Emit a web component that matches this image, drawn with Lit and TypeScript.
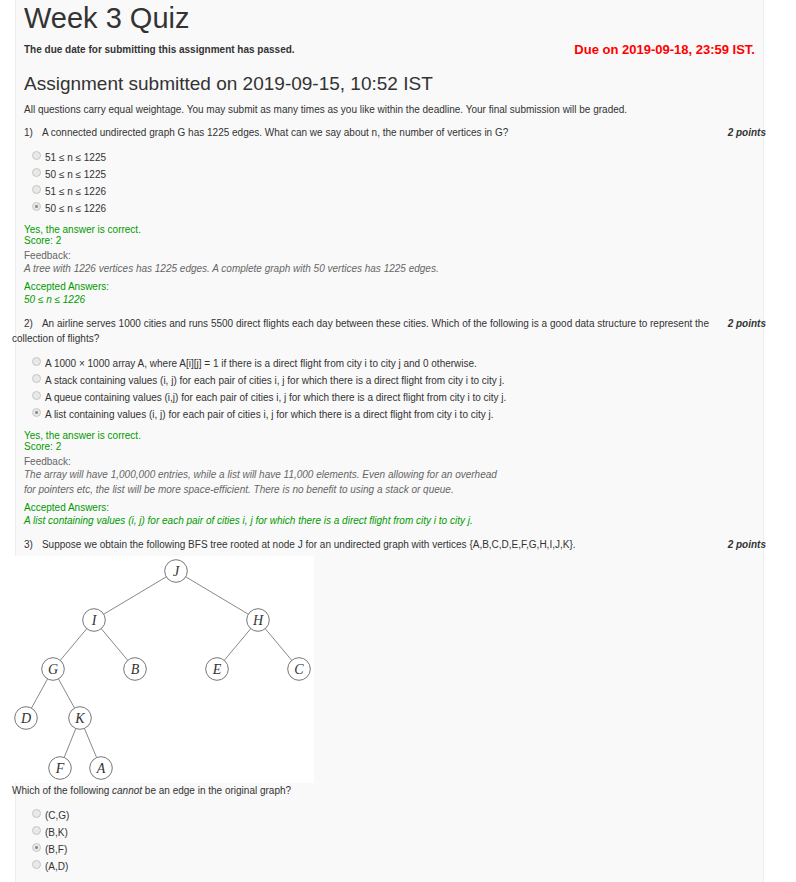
import { LitElement, html, svg, css, nothing } from "lit";
import type { TemplateResult } from "lit";
import { customElement, property } from "lit/decorators.js";

interface Question {
  id: number;
  prompt: string;
  options: string[];
  chosen: number;
  feedback?: string;
  accepted?: string;
  figure?: boolean;
}

const QUESTIONS: Question[] = [
  {
    id: 1,
    prompt:
      "A connected undirected graph G has 1225 edges. What can we say about n, the number of vertices in G?",
    options: ["51 ≤ n ≤ 1225", "50 ≤ n ≤ 1225", "51 ≤ n ≤ 1226", "50 ≤ n ≤ 1226"],
    chosen: 3,
    feedback:
      "A tree with 1226 vertices has 1225 edges. A complete graph with 50 vertices has 1225 edges.",
    accepted: "50 ≤ n ≤ 1226",
  },
  {
    id: 2,
    prompt:
      "An airline serves 1000 cities and runs 5500 direct flights each day between these cities. Which of the following is a good data structure to represent the collection of flights?",
    options: [
      "A 1000 × 1000 array A, where A[i][j] = 1 if there is a direct flight from city i to city j and 0 otherwise.",
      "A stack containing values (i, j) for each pair of cities i, j for which there is a direct flight from city i to city j.",
      "A queue containing values (i,j) for each pair of cities i, j for which there is a direct flight from city i to city j.",
      "A list containing values (i, j) for each pair of cities i, j for which there is a direct flight from city i to city j.",
    ],
    chosen: 3,
    feedback:
      "The array will have 1,000,000 entries, while a list will have 11,000 elements. Even allowing for an overhead\nfor pointers etc, the list will be more space-efficient. There is no benefit to using a stack or queue.",
    accepted:
      "A list containing values (i, j) for each pair of cities i, j for which there is a direct flight from city i to city j.",
  },
  {
    id: 3,
    prompt:
      "Suppose we obtain the following BFS tree rooted at node J for an undirected graph with vertices {A,B,C,D,E,F,G,H,I,J,K}.",
    options: ["(C,G)", "(B,K)", "(B,F)", "(A,D)"],
    chosen: 2,
    figure: true,
  },
];

const NODES: Record<string, [number, number]> = {
  J: [164, 15],
  I: [82, 64],
  H: [246, 64],
  G: [41, 113],
  B: [123, 113],
  E: [205, 113],
  C: [287, 113],
  D: [14, 162],
  K: [68, 162],
  F: [48, 212],
  A: [89, 212],
};

const EDGES = ["JI", "JH", "IG", "IB", "HE", "HC", "GD", "GK", "KF", "KA"];

@customElement("bfs-tree")
export class BfsTree extends LitElement {
  static styles = css`
    :host {
      display: block;
    }
    .tree {
      display: block;
      background: #fff;
    }
    .edge {
      stroke: #888;
      stroke-width: 1;
    }
    .node {
      fill: #fff;
      stroke: #777;
      stroke-width: 1;
    }
    .name {
      font: italic 14px "Liberation Serif", serif;
      fill: #333;
      text-anchor: middle;
    }
  `;

  render() {
    return html`<svg class="tree" width="302" height="227" viewBox="0 0 302 227" role="img" aria-label="BFS tree rooted at J">
      ${EDGES.map(([a, b]) => {
        const [x1, y1] = NODES[a];
        const [x2, y2] = NODES[b];
        return svg`<line class="edge" x1=${x1} y1=${y1} x2=${x2} y2=${y2}></line>`;
      })}
      ${Object.entries(NODES).map(
        ([name, [x, y]]) => svg`
          <circle class="node" cx=${x} cy=${y} r="11.3"></circle>
          <text class="name" x=${x} y=${y + 5}>${name}</text>`
      )}
    </svg>`;
  }
}

@customElement("quiz-question")
export class QuizQuestion extends LitElement {
  @property({ attribute: false }) question!: Question;

  static styles = css`
    :host {
      display: block;
      line-height: 15px;
    }
    .head {
      display: flex;
      justify-content: space-between;
      gap: 8px;
    }
    .prompt {
      margin: 0;
      text-indent: 12px;
    }
    .num {
      margin-right: 9px;
    }
    .points {
      flex: none;
      font-weight: bold;
      font-style: italic;
    }
    .figure {
      margin-top: 4px;
    }
    .after {
      margin: 0;
    }
    .options {
      border: 0;
      margin: 9px 0 0;
      padding: 0 0 0 20px;
      min-width: 0;
    }
    .option {
      display: flex;
      align-items: flex-start;
      gap: 4px;
      line-height: 17px;
    }
    .radio {
      appearance: none;
      box-sizing: border-box;
      flex: none;
      width: 9px;
      height: 9px;
      margin: 2px 0 0;
      border: 1px solid #c6c6c6;
      border-radius: 50%;
      background: #e9e9e9;
    }
    .radio:checked {
      background: radial-gradient(circle, #8c8c8c 0 1px, #e9e9e9 2px);
    }
    .result {
      margin: 7px 12px 9px;
    }
    .result p {
      margin: 0;
    }
    .line {
      line-height: 11px;
    }
    .good {
      color: #090;
    }
    .note {
      color: #666;
      margin-top: 4px;
    }
    .accepted {
      margin-top: 5px;
    }
    .body {
      font-style: italic;
      white-space: pre-line;
    }
  `;

  private renderFigure(): TemplateResult {
    return html`<bfs-tree class="figure"></bfs-tree>
      <p class="after">Which of the following <em>cannot</em> be an edge in the original graph?</p>`;
  }

  private renderResult(q: Question): TemplateResult {
    return html`<div class="result">
      <p class="line good">Yes, the answer is correct.</p>
      <p class="line good">Score: 2</p>
      <div class="note">
        <p class="line">Feedback:</p>
        <p class="body">${q.feedback}</p>
      </div>
      <div class="accepted good">
        <p class="line">Accepted Answers:</p>
        <p class="body">${q.accepted}</p>
      </div>
    </div>`;
  }

  render() {
    const q = this.question;
    return html`
      <div class="head">
        <p class="prompt"><span class="num">${q.id})</span>${q.prompt}</p>
        <span class="points">2 points</span>
      </div>
      ${q.figure ? this.renderFigure() : nothing}
      <fieldset class="options" aria-label="Question ${q.id}">
        ${q.options.map(
          (text, i) => html`<label class="option"
            ><input class="radio" type="radio" name="q${q.id}" disabled ?checked=${i === q.chosen} /><span>${text}</span></label
          >`
        )}
      </fieldset>
      ${q.accepted ? this.renderResult(q) : nothing}
    `;
  }
}

@customElement("app-root")
export class AppRoot extends LitElement {
  static styles = css`
    :host {
      display: block;
      font: 10px/15px "Liberation Sans", Arial, sans-serif;
      color: #333;
      background: #fff;
    }
    .panel {
      box-sizing: border-box;
      min-height: 100vh;
      margin: 0 32px 0 15px;
      border: solid #eee;
      border-width: 0 1px;
      background: #f9f9f9;
    }
    .intro {
      padding: 0 8px;
    }
    .title {
      margin: 0;
      font-size: 29px;
      line-height: 36px;
      font-weight: normal;
    }
    .due {
      display: flex;
      justify-content: space-between;
      align-items: center;
      margin-top: 6px;
      font-weight: bold;
      line-height: 16px;
    }
    .deadline {
      color: #f00;
      font-size: 13px;
    }
    .submitted {
      margin: 15px 0 0;
      font-size: 19px;
      line-height: 22px;
      font-weight: normal;
    }
    .rules {
      margin: 7px 0 8px;
    }
    .questions {
      margin: 0 -3px 0 -4px;
    }
  `;

  render() {
    return html`<main class="panel">
      <header class="intro">
        <h1 class="title">Week 3 Quiz</h1>
        <div class="due">
          <span>The due date for submitting this assignment has passed.</span>
          <span class="deadline">Due on 2019-09-18, 23:59 IST.</span>
        </div>
        <h2 class="submitted">Assignment submitted on 2019-09-15, 10:52 IST</h2>
        <p class="rules">
          All questions carry equal weightage. You may submit as many times as you like within the deadline. Your final
          submission will be graded.
        </p>
      </header>
      <div class="questions">
        ${QUESTIONS.map((q) => html`<quiz-question .question=${q}></quiz-question>`)}
      </div>
    </main>`;
  }
}
